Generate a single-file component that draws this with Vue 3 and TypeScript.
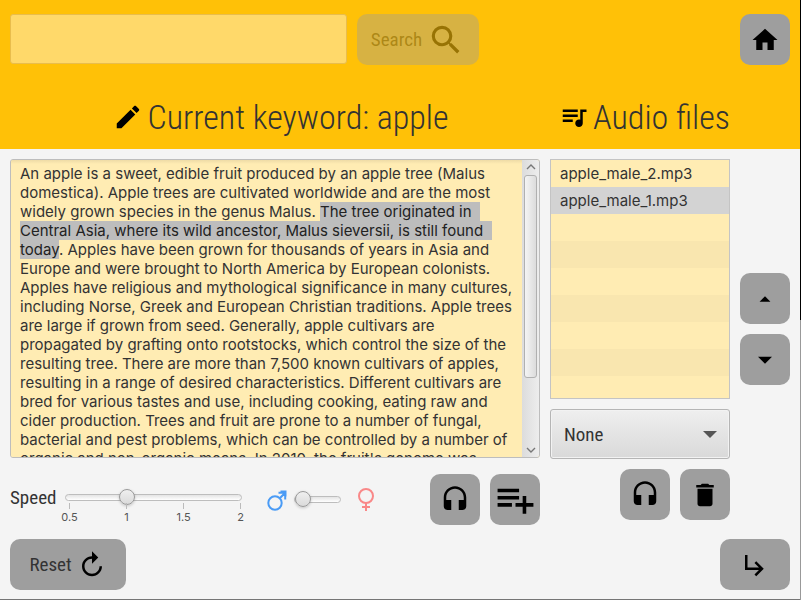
<script setup lang="ts">
import { computed, onMounted, ref } from 'vue'

const query = ref('')
const keyword = ref('apple')
const speed = ref(1)
const voice = ref(0)
const music = ref('None')
const files = ref(['apple_male_2.mp3', 'apple_male_1.mp3'])
const selected = ref(1)
const ticks = ['0.5', '1', '1.5', '2']

const article = ref(
  'An apple is a sweet, edible fruit produced by an apple tree (Malus domestica). ' +
    'Apple trees are cultivated worldwide and are the most widely grown species in the genus Malus. ' +
    'The tree originated in Central Asia, where its wild ancestor, Malus sieversii, is still found today. ' +
    'Apples have been grown for thousands of years in Asia and Europe and were brought to North America by European colonists. ' +
    'Apples have religious and mythological significance in many cultures, including Norse, Greek and European Christian traditions. ' +
    'Apple trees are large if grown from seed. Generally, apple cultivars are propagated by grafting onto rootstocks, ' +
    'which control the size of the resulting tree. There are more than 7,500 known cultivars of apples, ' +
    'resulting in a range of desired characteristics. Different cultivars are bred for various tastes and use, ' +
    'including cooking, eating raw and cider production. Trees and fruit are prone to a number of fungal, ' +
    'bacterial and pest problems, which can be controlled by a number of organic and non-organic means. ' +
    "In 2010, the fruit's genome was"
)

const editor = ref<HTMLTextAreaElement | null>(null)
const scroll = ref(0)
const thumbTop = computed(() => `${scroll.value * 24}%`)

function onScroll() {
  const el = editor.value
  if (!el) return
  const range = el.scrollHeight - el.clientHeight
  scroll.value = range > 0 ? el.scrollTop / range : 0
}

function move(step: number) {
  const to = selected.value + step
  if (to < 0 || to >= files.value.length) return
  const list = [...files.value]
  const [item] = list.splice(selected.value, 1)
  list.splice(to, 0, item)
  files.value = list
  selected.value = to
}

function remove() {
  files.value.splice(selected.value, 1)
  selected.value = Math.max(0, selected.value - 1)
}

function reset() {
  speed.value = 1
  voice.value = 0
}

onMounted(() => {
  const el = editor.value
  if (!el) return
  const start = article.value.indexOf('The tree originated')
  const end = article.value.indexOf('today') + 'today'.length
  el.focus({ preventScroll: true })
  el.setSelectionRange(start, end)
})
</script>

<template>
  <div class="window">
    <div class="page">
      <header class="top">
        <form class="search" @submit.prevent>
          <input v-model="query" class="query" type="text" aria-label="Search term" />
          <button class="btn wide" type="submit" :disabled="!query">
            Search
            <svg class="i38" viewBox="0 0 24 24"><path d="M15.5 14h-.79l-.28-.27A6.471 6.471 0 0 0 16 9.5 6.5 6.5 0 1 0 9.5 16c1.61 0 3.09-.59 4.23-1.57l.27.28v.79l5 4.99L20.49 19l-4.99-5zm-6 0C7.01 14 5 11.99 5 9.5S7.01 5 9.5 5 14 7.01 14 9.5 11.99 14 9.5 14z" /></svg>
          </button>
          <button class="btn home" type="button" aria-label="Home">
            <svg viewBox="0 0 24 24"><path d="M10 20v-6h4v6h5v-8h3L12 3 2 12h3v8z" /></svg>
          </button>
        </form>
        <div class="titles">
          <h1 class="title">
            <svg viewBox="0 0 24 24"><path d="M3 17.25V21h3.75L17.81 9.94l-3.75-3.75L3 17.25zM20.71 7.04c.39-.39.39-1.02 0-1.41l-2.34-2.34c-.39-.39-1.02-.39-1.41 0l-1.83 1.83 3.75 3.75 1.83-1.83z" /></svg>
            <span>Current keyword: {{ keyword }}</span>
          </h1>
          <h1 class="title audio">
            <svg viewBox="0 0 24 24"><path d="M15 6H3v2h12V6zm0 4H3v2h12v-2zM3 16h8v-2H3v2zM17 6v8.18c-.31-.11-.65-.18-1-.18-1.66 0-3 1.34-3 3s1.34 3 3 3 3-1.34 3-3V8h3V6h-5z" /></svg>
            <span>Audio files</span>
          </h1>
        </div>
      </header>

      <main class="body">
        <div class="editor">
          <textarea ref="editor" v-model="article" spellcheck="false" aria-label="Article text" @scroll="onScroll"></textarea>
          <div class="scrollbar" aria-hidden="true">
            <svg viewBox="0 0 10 6"><path d="M1 5l4-4 4 4" /></svg>
            <div class="track"><div class="thumb" :style="{ marginTop: thumbTop }"></div></div>
            <svg viewBox="0 0 10 6"><path d="M1 1l4 4 4-4" /></svg>
          </div>
        </div>

        <div class="library">
          <ul class="files">
            <li v-for="(file, i) in files" :key="file">
              <button type="button" :class="{ active: i === selected }" @click="selected = i">{{ file }}</button>
            </li>
          </ul>
          <div class="picker">
            <select v-model="music" aria-label="Background music">
              <option>None</option>
            </select>
            <svg viewBox="0 0 14 7"><path d="M0 0h14l-7 7z" /></svg>
          </div>
        </div>

        <div class="order">
          <button class="btn" type="button" aria-label="Move up" @click="move(-1)">
            <svg class="i26" viewBox="0 0 24 24"><path d="M7 14.500l5-5 5 5z" /></svg>
          </button>
          <button class="btn" type="button" aria-label="Move down" @click="move(1)">
            <svg viewBox="0 0 24 24"><path d="M6.400 9.400h11.200L12 15z" /></svg>
          </button>
        </div>

        <div class="controls">
          <label class="speed-label" for="speed">Speed</label>
          <div class="speed">
            <input id="speed" v-model.number="speed" type="range" min="0.5" max="2" step="0.1" />
            <div class="ticks"><span v-for="t in ticks" :key="t">{{ t }}</span></div>
          </div>
          <div class="voice">
            <svg class="male" viewBox="0 0 22 24"><circle cx="9" cy="15" r="6.700" /><path d="M14 10l5-5M12.500 4.800h6.700v6.700M14.500 3.500h5v5" /></svg>
            <input v-model.number="voice" type="range" min="0" max="1" step="1" aria-label="Voice" />
            <svg class="female" viewBox="0 0 18 24"><circle cx="9" cy="8" r="7" /><path d="M9 15v8M5 19h8" /></svg>
          </div>
          <div class="actions">
            <button class="btn" type="button" aria-label="Listen to selection">
              <svg viewBox="0 0 24 24"><path d="M12 1c-4.97 0-9 4.03-9 9v7c0 1.66 1.34 3 3 3h3v-8H5v-2c0-3.87 3.13-7 7-7s7 3.13 7 7v2h-4v8h3c1.66 0 3-1.34 3-3v-7c0-4.97-4.03-9-9-9z" /></svg>
            </button>
            <button class="btn" type="button" aria-label="Add to audio files">
              <svg class="i43" viewBox="0 0 24 24"><path d="M14 10H2v2h12v-2zm0-4H2v2h12V6zm4 8v-4h-2v4h-4v2h4v4h2v-4h4v-2h-4zM2 16h8v-2H2v2z" /></svg>
            </button>
          </div>
        </div>

        <div class="file-actions">
          <button class="btn" type="button" aria-label="Play file">
            <svg viewBox="0 0 24 24"><path d="M12 1c-4.97 0-9 4.03-9 9v7c0 1.66 1.34 3 3 3h3v-8H5v-2c0-3.87 3.13-7 7-7s7 3.13 7 7v2h-4v8h3c1.66 0 3-1.34 3-3v-7c0-4.97-4.03-9-9-9z" /></svg>
          </button>
          <button class="btn" type="button" aria-label="Delete file" @click="remove">
            <svg viewBox="0 0 24 24"><path d="M6 19c0 1.1.9 2 2 2h8c1.1 0 2-.9 2-2V7H6v12zM19 4h-3.5l-1-1h-5l-1 1H5v2h14V4z" /></svg>
          </button>
        </div>

        <footer class="bottom">
          <button class="btn wide reset" type="button" @click="reset">
            Reset
            <svg viewBox="0 0 24 24"><path d="M12 5V1l5 5-5 5V7c-3.31 0-6 2.69-6 6s2.69 6 6 6 6-2.69 6-6h2c0 4.42-3.58 8-8 8s-8-3.58-8-8 3.58-8 8-8z" /></svg>
          </button>
          <button class="btn next" type="button" aria-label="Next">
            <svg viewBox="0 0 24 24"><path d="M19 15l-6 6-1.42-1.42L15.17 16H4V4h2v10h9.17l-3.59-3.58L13 9l6 6z" /></svg>
          </button>
        </footer>
      </main>
    </div>
    <div class="edge"></div>
  </div>
</template>

<style>
body {
  margin: 0;
}
</style>

<style scoped>
* {
  box-sizing: border-box;
}
.window {
  display: flex;
  min-height: 100vh;
  background: #f4f4f4;
  color: #333;
  font-family: 'Roboto Condensed', 'Liberation Sans Narrow', Roboto, sans-serif;
  font-size: 19px;
  font-weight: 400;
}
.page {
  display: flex;
  flex: 1;
  flex-direction: column;
  min-width: 0;
  border-bottom: 1px solid #757575;
}
.edge {
  width: 1px;
  background: linear-gradient(#000 0 320px, #999 320px);
}
svg {
  display: block;
  flex: none;
  width: 30px;
  height: 30px;
}
.i26 {
  width: 26px;
  height: 26px;
}
.i38 {
  width: 38px;
  height: 38px;
}
.i43 {
  width: 43px;
  height: 43px;
}

.btn {
  display: flex;
  flex: none;
  align-items: center;
  justify-content: center;
  width: 50px;
  height: 51px;
  padding: 0;
  border: 0;
  border-radius: 10px;
  background: #9e9e9e;
  color: #333;
  font: inherit;
}
.btn svg {
  fill: #000;
}
.btn.wide {
  gap: 5px;
  width: 122px;
}
.btn:disabled {
  opacity: 0.4;
}
.btn.reset {
  width: 116px;
}
.btn.next {
  width: 70px;
}

.top {
  padding: 14px 10px 11px;
  background: #ffc107;
}
.search {
  display: flex;
  gap: 10px;
}
.query {
  flex: 0 1 337px;
  min-width: 0;
  height: 50px;
  padding: 0 12px;
  border: 1px solid #e9bd4c;
  border-radius: 3px;
  background: #ffd96a;
  color: #333;
  font: inherit;
  outline: none;
}
.home {
  margin-left: auto;
}
.titles {
  display: grid;
  grid-template-columns: minmax(0, 1fr) 180px 50px;
  gap: 10px;
  padding-top: 31px;
}
.title {
  display: flex;
  align-items: center;
  justify-content: center;
  gap: 4px;
  margin: 0;
  padding-left: 12px;
  font-size: 34px;
  font-weight: 300;
  line-height: 42px;
  white-space: nowrap;
}
.title svg {
  fill: #000;
}
.title.audio {
  justify-content: flex-end;
}

.body {
  display: grid;
  flex: 1;
  grid-template-columns: minmax(0, 1fr) 180px 50px;
  grid-template-rows: minmax(300px, 1fr) 60px 51px;
  gap: 10px;
  padding: 10px 10px 9px;
}
.editor {
  display: flex;
  overflow: hidden;
  margin-bottom: 1px;
  border: 1px solid #bdbdbd;
  border-radius: 3px;
  background: #ffecb3;
}
textarea {
  flex: 1;
  min-width: 0;
  padding: 4px 9px 0;
  border: 0;
  background: linear-gradient(#eedba6, #ffecb3 4px);
  color: #333;
  font-family: Inter, sans-serif;
  font-size: 15px;
  line-height: 19px;
  outline: none;
  resize: none;
  scrollbar-width: none;
}
textarea::selection {
  background: #bdbdbd;
  color: #222;
}
.scrollbar {
  display: flex;
  flex-direction: column;
  align-items: center;
  width: 17px;
  padding: 4px 0;
  background: linear-gradient(90deg, #dcdcdc, #ededed);
}
.scrollbar svg {
  width: 10px;
  height: 6px;
  fill: none;
  stroke: #777;
  stroke-width: 1.4;
}
.track {
  display: flex;
  flex: 1;
  align-items: flex-start;
  margin: 5px 0;
  height: 0;
}
.thumb {
  width: 13px;
  height: 76%;
  border: 1px solid #b0b0b0;
  border-radius: 3px;
  background: linear-gradient(90deg, #f4f4f4, #dcdcdc);
}

.library {
  display: flex;
  flex-direction: column;
  gap: 10px;
}
.files {
  flex: 1;
  margin: 0;
  padding: 0;
  overflow: hidden;
  border: 1px solid #c4c4c4;
  background: repeating-linear-gradient(#ffecb3 0 27px, #f9e6af 27px 54px);
  list-style: none;
}
.files button {
  display: block;
  width: 100%;
  height: 27px;
  padding: 0 9px;
  border: 0;
  background: transparent;
  color: #333;
  font-family: Inter, sans-serif;
  font-size: 15px;
  text-align: left;
}
.files .active {
  background: #d3d3d3;
}
.picker {
  display: grid;
  align-items: center;
}
.picker > * {
  grid-area: 1 / 1;
}
.picker select {
  width: 100%;
  height: 50px;
  padding: 0 13px;
  border: 1px solid #b5b5b5;
  border-radius: 3px;
  appearance: none;
  background: linear-gradient(#efefef, #d9d9d9);
  box-shadow: inset 0 0 0 1px #f2f2f2;
  color: #333;
  font: inherit;
}
.picker svg {
  width: 14px;
  height: 7px;
  margin-right: 13px;
  justify-self: end;
  fill: #555;
  pointer-events: none;
}
.order {
  display: flex;
  flex-direction: column;
  gap: 10px;
  padding-top: 114px;
}

.controls {
  display: flex;
  align-items: flex-start;
  padding-top: 5px;
}
.speed-label {
  width: 55px;
  line-height: 47px;
}
.speed {
  width: 177px;
  padding-top: 15px;
}
input[type='range'] {
  display: block;
  width: 100%;
  height: 16px;
  margin: 0;
  appearance: none;
  background: transparent;
}
input[type='range']::-webkit-slider-runnable-track {
  height: 7px;
  border: 1px solid #bdbdbd;
  border-radius: 4px;
  background: linear-gradient(#e4e4e4, #fff);
}
input[type='range']::-webkit-slider-thumb {
  width: 16px;
  height: 16px;
  margin-top: -6px;
  border: 1px solid #999;
  border-radius: 50%;
  appearance: none;
  background: linear-gradient(#efefef, #dadada);
  box-shadow: 0 1px 3px #0003;
}
.ticks {
  display: flex;
  justify-content: space-between;
  margin-top: -2px;
  padding: 0 1px 0 4px;
}
.ticks span {
  display: flex;
  flex-direction: column;
  align-items: center;
  width: 1px;
  color: #555;
  font-family: Inter, sans-serif;
  font-size: 11px;
  line-height: 14px;
}
.ticks span::before {
  width: 1px;
  height: 6px;
  margin-bottom: 1px;
  background: #bbb;
  content: '';
}
.voice {
  display: flex;
  align-items: center;
  height: 51px;
  margin-left: 24px;
}
.voice svg {
  height: 24px;
  fill: none;
  stroke-width: 2;
}
.voice .male {
  width: 22px;
  stroke: #4a9bf5;
}
.voice .female {
  width: 18px;
  stroke: #f98888;
}
.voice input {
  width: 47px;
  margin: 0 16px 0 6px;
}
.actions,
.file-actions {
  display: flex;
  gap: 10px;
}
.actions {
  margin-left: auto;
}
.file-actions {
  justify-content: flex-end;
}
.bottom {
  display: flex;
  grid-column: 1 / -1;
  grid-row: 3;
  justify-content: space-between;
}
</style>
